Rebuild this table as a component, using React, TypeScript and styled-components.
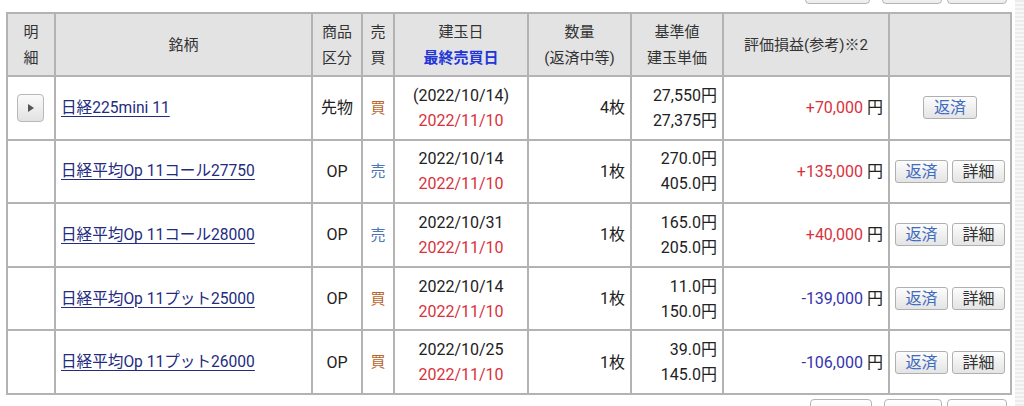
import styled, { createGlobalStyle } from 'styled-components';

const GlobalStyle = createGlobalStyle`
  html, body {
    margin: 0;
    padding: 0;
    background: #ffffff;
    overflow: hidden;
  }
  body {
    font-family: Roboto, 'Noto Sans CJK JP', sans-serif;
    color: #222;
  }
`;

const Page = styled.div`
  display: flex;
  width: 1024px;
  height: 406px;
  overflow: hidden;
`;

const Main = styled.div`
  width: 1012px;
  padding-left: 6px;
  box-sizing: border-box;
  display: flex;
  flex-direction: column;
`;

const ScrollStrip = styled.div`
  width: 9px;
  margin-left: 3px;
  background: repeating-linear-gradient(0deg, #ececec 0 2px, #f7f7f7 2px 4px);
`;

const ButtonBar = styled.div<{ $top?: boolean }>`
  display: flex;
  justify-content: flex-end;
  gap: 5px;
  padding-right: 5px;
  height: 24px;
  flex-shrink: 0;
  margin-top: ${(p) => (p.$top ? '-20px' : '4px')};
  margin-bottom: ${(p) => (p.$top ? '8px' : '0')};
`;

const BarButton = styled.span<{ $w: number; $gapRight?: number }>`
  width: ${(p) => p.$w}px;
  height: 24px;
  box-sizing: border-box;
  border: 1px solid #b5b5b5;
  border-radius: 4px;
  background: linear-gradient(#ffffff, #ededed);
  margin-right: ${(p) => p.$gapRight ?? 0}px;
`;

const Table = styled.table`
  width: 1004px;
  border-collapse: collapse;
  table-layout: fixed;
  border: 2px solid #b3b3b3;
`;

const Th = styled.th`
  background: #e3e3e3;
  border: 2px solid #b3b3b3;
  font-weight: normal;
  font-size: 15px;
  line-height: 26px;
  color: #333;
  height: 61px;
  padding: 0 2px;
  text-align: center;
  vertical-align: middle;
`;

const Accent = styled.span`
  color: #2236d8;
  font-weight: bold;
`;

const Td = styled.td<{ $align?: 'left' | 'center' | 'right' }>`
  border: 2px solid #b3b3b3;
  height: 61.6px;
  padding: 0 5px;
  font-size: 16px;
  line-height: 25px;
  color: #222;
  text-align: ${(p) => p.$align ?? 'center'};
  vertical-align: middle;
  white-space: nowrap;
`;

const ExpandButton = styled.span`
  display: inline-flex;
  align-items: center;
  justify-content: center;
  width: 27px;
  height: 28px;
  box-sizing: border-box;
  border: 1px solid #b9b9b9;
  border-radius: 4px;
  background: linear-gradient(#fafafa, #e2e2e2);
  vertical-align: middle;
  margin-left: -2px;

  &::after {
    content: '';
    width: 0;
    height: 0;
    border-top: 4px solid transparent;
    border-bottom: 4px solid transparent;
    border-left: 6px solid #555;
    margin-left: 2px;
  }
`;

const NameLink = styled.a`
  color: #232b7e;
  font-size: 15.6px;
  text-decoration: underline;
  text-underline-offset: 3px;
`;

const Side = styled.span<{ $sell: boolean }>`
  color: ${(p) => (p.$sell ? '#4a78b0' : '#b8652e')};
  font-size: 15px;
`;

const Red = styled.span`
  color: #d8323c;
`;

const Pnl = styled.span<{ $neg: boolean }>`
  color: ${(p) => (p.$neg ? '#3535ad' : '#d8323c')};
`;

const Yen = styled.span`
  color: #222;
  margin-left: 4px;
`;

const Actions = styled.div`
  display: flex;
  justify-content: center;
  gap: 4px;
`;

const ActionButton = styled.span<{ $primary?: boolean }>`
  display: inline-flex;
  align-items: center;
  justify-content: center;
  width: 54px;
  height: 23px;
  box-sizing: border-box;
  border: 1px solid #b0b0b0;
  border-radius: 3px;
  background: linear-gradient(#fdfdfd, #e4e4e4);
  color: ${(p) => (p.$primary ? '#3f6cc0' : '#333')};
  font-size: 16px;
`;

type Row = {
  name: string;
  kind: string;
  sell: boolean;
  open: string;
  last: string;
  qty: string;
  base: string;
  cost: string;
  pnl: string;
  future?: boolean;
};

const rows: Row[] = [
  { name: '日経225mini 11', kind: '先物', sell: false, open: '(2022/10/14)', last: '2022/11/10', qty: '4枚', base: '27,550円', cost: '27,375円', pnl: '+70,000', future: true },
  { name: '日経平均Op 11コール27750', kind: 'OP', sell: true, open: '2022/10/14', last: '2022/11/10', qty: '1枚', base: '270.0円', cost: '405.0円', pnl: '+135,000' },
  { name: '日経平均Op 11コール28000', kind: 'OP', sell: true, open: '2022/10/31', last: '2022/11/10', qty: '1枚', base: '165.0円', cost: '205.0円', pnl: '+40,000' },
  { name: '日経平均Op 11プット25000', kind: 'OP', sell: false, open: '2022/10/14', last: '2022/11/10', qty: '1枚', base: '11.0円', cost: '150.0円', pnl: '-139,000' },
  { name: '日経平均Op 11プット26000', kind: 'OP', sell: false, open: '2022/10/25', last: '2022/11/10', qty: '1枚', base: '39.0円', cost: '145.0円', pnl: '-106,000' },
];

const widths = [48, 257, 50, 32, 134, 103, 92, 166, 122];

export default function App() {
  return (
    <>
      <GlobalStyle />
      <Page>
        <Main>
          <ButtonBar $top>
            <BarButton $w={65} $gapRight={7} />
            <BarButton $w={60} />
            <BarButton $w={60} />
          </ButtonBar>
          <Table>
            <colgroup>
              {widths.map((w, i) => (
                <col key={i} style={{ width: w }} />
              ))}
            </colgroup>
            <thead>
              <tr>
                <Th>明<br />細</Th>
                <Th>銘柄</Th>
                <Th>商品<br />区分</Th>
                <Th>売<br />買</Th>
                <Th>建玉日<br /><Accent>最終売買日</Accent></Th>
                <Th>数量<br />(返済中等)</Th>
                <Th>基準値<br />建玉単価</Th>
                <Th>評価損益(参考)※2</Th>
                <Th />
              </tr>
            </thead>
            <tbody>
              {rows.map((r) => (
                <tr key={r.name}>
                  <Td>{r.future ? <ExpandButton /> : null}</Td>
                  <Td $align="left">
                    <NameLink href="#">{r.name}</NameLink>
                  </Td>
                  <Td>{r.kind}</Td>
                  <Td>
                    <Side $sell={r.sell}>{r.sell ? '売' : '買'}</Side>
                  </Td>
                  <Td>
                    {r.open}
                    <br />
                    <Red>{r.last}</Red>
                  </Td>
                  <Td $align="right">{r.qty}</Td>
                  <Td $align="right">
                    {r.base}
                    <br />
                    {r.cost}
                  </Td>
                  <Td $align="right">
                    <Pnl $neg={r.pnl.startsWith('-')}>{r.pnl}</Pnl>
                    <Yen>円</Yen>
                  </Td>
                  <Td>
                    <Actions>
                      <ActionButton $primary>返済</ActionButton>
                      {r.future ? null : <ActionButton>詳細</ActionButton>}
                    </Actions>
                  </Td>
                </tr>
              ))}
            </tbody>
          </Table>
          <ButtonBar>
            <BarButton $w={62} $gapRight={7} />
            <BarButton $w={58} />
            <BarButton $w={60} />
          </ButtonBar>
        </Main>
        <ScrollStrip />
      </Page>
    </>
  );
}
